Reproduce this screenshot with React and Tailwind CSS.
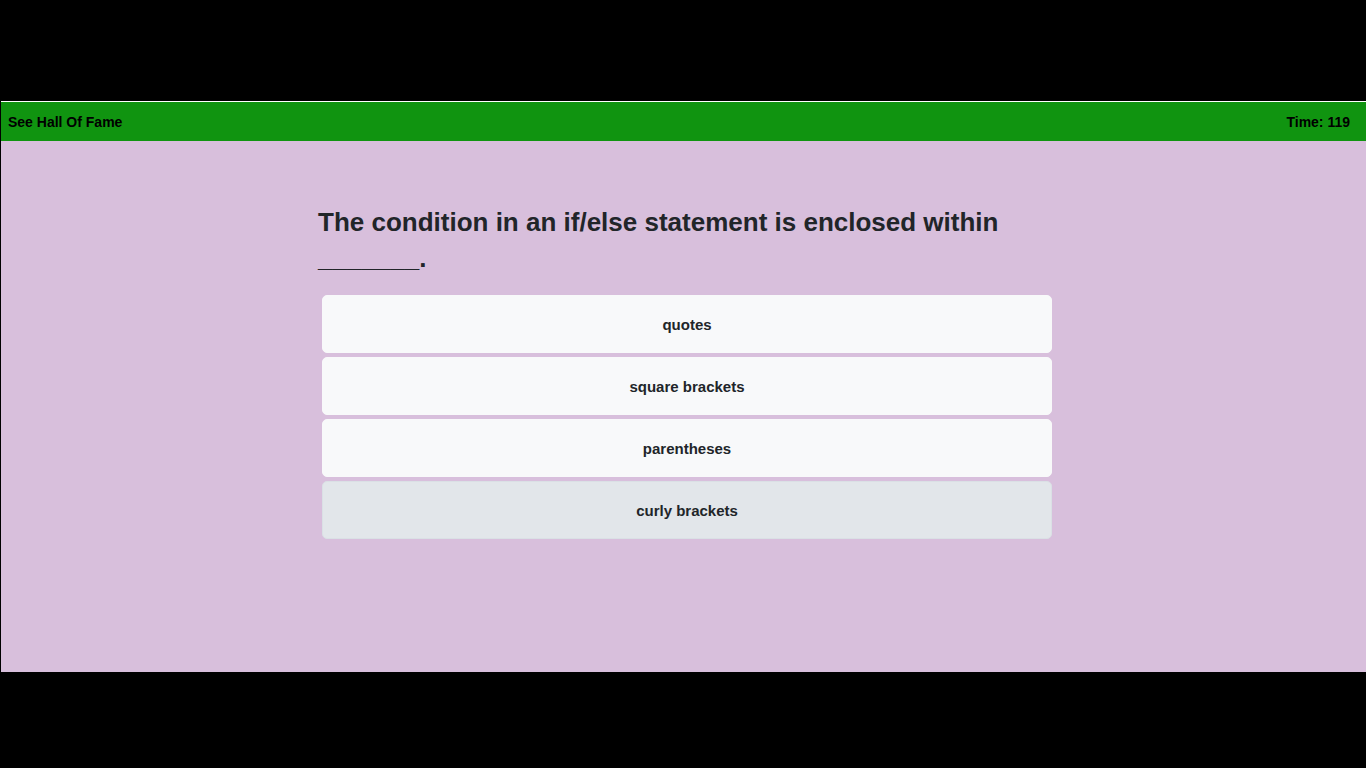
import React from 'react';

const answers = ['quotes', 'square brackets', 'parentheses', 'curly brackets'];

function AnswerButton({ label, active }) {
  return (
    <button
      className={
        'w-full h-[58px] pt-[2px] rounded-[5px] border text-[15px] font-bold text-[#212529] ' +
        (active ? 'bg-[#e2e6ea] border-[#dae0e5]' : 'bg-[#f8f9fa] border-[#f8f9fa]')
      }
    >
      {label}
    </button>
  );
}

export default function App() {
  return (
    <div className="min-h-screen bg-black pt-[101px] font-['Liberation_Sans',Arial,sans-serif]">
      <div className="ml-[1px] h-[571px] flex flex-col bg-[#d8bfdc] border-t border-white">
        {/* top bar */}
        <header className="h-[39px] pt-[2px] bg-[#109410] flex items-center justify-between pl-[7px] pr-[16px] text-[14px] font-bold text-black">
          <span>See Hall Of Fame</span>
          <span>Time: 119</span>
        </header>

        {/* question */}
        <main className="flex-1 pt-[63px]">
          <div className="w-[734px] ml-[317px]">
            <h2 className="text-[26px] leading-[36px] font-bold text-[#212529] pr-[40px]">
              The condition in an if/else statement is enclosed within _______.
            </h2>
            <div className="mt-[19px] pl-[4px] flex flex-col gap-[4px]">
              {answers.map((a, i) => (
                <AnswerButton key={a} label={a} active={i === 3} />
              ))}
            </div>
          </div>
        </main>
      </div>
    </div>
  );
}
